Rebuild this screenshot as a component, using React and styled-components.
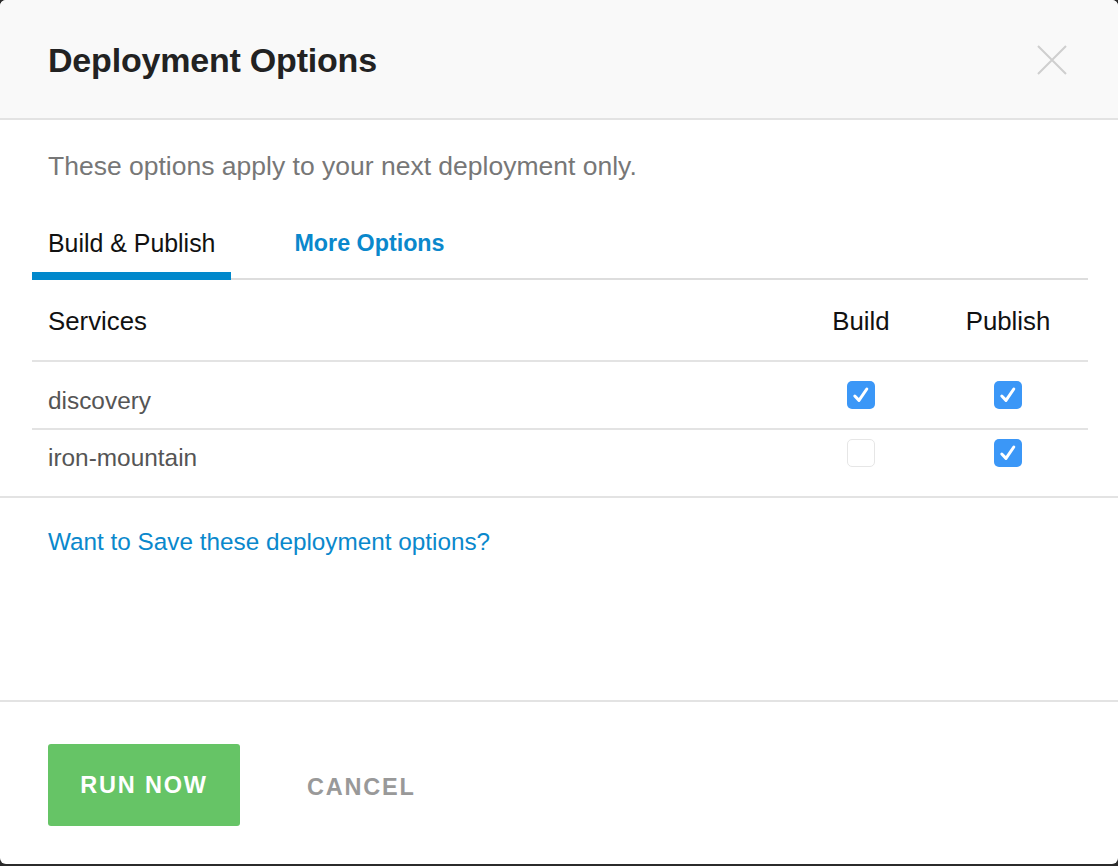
import React, { useState } from 'react';
import styled, { createGlobalStyle } from 'styled-components';

const GlobalStyle = createGlobalStyle`
  html, body {
    margin: 0;
    padding: 0;
    background: #2b2b2b;
  }
  body {
    font-family: "Liberation Sans", Arial, Helvetica, sans-serif;
    -webkit-font-smoothing: antialiased;
  }
`;

const Modal = styled.div`
  width: 1118px;
  height: 864px;
  background: #fff;
  border-radius: 6px;
  overflow: hidden;
  display: flex;
  flex-direction: column;
  box-sizing: border-box;
`;

const Header = styled.div`
  height: 120px;
  box-sizing: border-box;
  background: #f9f9f9;
  border-bottom: 2px solid #e3e3e3;
  display: flex;
  align-items: center;
  justify-content: space-between;
  padding: 2px 51px 0 48px;
`;

const Title = styled.h1`
  margin: 0;
  font-size: 34px;
  font-weight: 700;
  color: #222;
  letter-spacing: -0.2px;
`;

const CloseButton = styled.button`
  background: none;
  border: none;
  padding: 0;
  width: 31px;
  height: 31px;
  cursor: pointer;
  display: flex;
  align-items: center;
  justify-content: center;
`;

const Body = styled.div`
  padding: 30px 30px 0 32px;
`;

const Intro = styled.p`
  margin: 0 0 0 16px;
  font-size: 26.5px;
  color: #777;
  line-height: 32px;
`;

const Tabs = styled.div`
  display: flex;
  margin-top: 44px;
  border-bottom: 2px solid #ddd;
`;

const Tab = styled.div`
  padding: 3px 16px 0;
  margin-bottom: -2px;
  line-height: 28px;
  color: ${(p) => (p.$active ? '#111' : '#0a88cc')};
  font-weight: ${(p) => (p.$active ? 400 : 700)};
  border-bottom: ${(p) => (p.$active ? '8px solid #0088cc' : 'none')};
  padding-bottom: ${(p) => (p.$active ? '15px' : '23px')};
  margin-left: ${(p) => (p.$active ? '0' : '47px')};
  font-size: ${(p) => (p.$active ? '24.9px' : '23.3px')};
  cursor: pointer;
`;

const Table = styled.div`
  display: flex;
  flex-direction: column;
`;

const HeadRow = styled.div`
  display: grid;
  grid-template-columns: 1fr 134px 160px;
  align-items: center;
  height: 82px;
  border-bottom: 2px solid #e3e3e3;
  box-sizing: border-box;
  padding: 2px 0 0 16px;
  font-size: 25.8px;
  color: #111;
`;

const HeadCell = styled.div`
  text-align: ${(p) => p.$align || 'left'};
`;

const Rows = styled.div`
  padding: 10px 0;
`;

const Row = styled.div`
  display: grid;
  grid-template-columns: 1fr 134px 160px;
  align-items: center;
  height: ${(p) => (p.$last ? '56px' : '58px')};
  border-bottom: ${(p) => (p.$last ? 'none' : '2px solid #e3e3e3')};
  box-sizing: border-box;
  padding-left: 16px;
  font-size: 24.4px;
  color: #555;
`;

const Name = styled.div`
  padding-top: ${(p) => (p.$first ? '1px' : '0')};
`;

const BoxCell = styled.div`
  display: flex;
  justify-content: center;
`;

const Check = styled.span`
  width: 28px;
  height: 28px;
  box-sizing: border-box;
  border-radius: 5px;
  background: ${(p) => (p.$on ? '#3b97f7' : '#fff')};
  border: ${(p) => (p.$on ? 'none' : '1px solid #e6e6e6')};
  display: flex;
  align-items: center;
  justify-content: center;
  cursor: pointer;
  margin-top: -10px;
`;

const Divider = styled.div`
  height: 2px;
  background: #e3e3e3;
`;

const SaveLink = styled.a`
  display: block;
  margin: 28px 0 0 48px;
  font-size: 24.3px;
  line-height: 32px;
  color: #0a88cc;
  text-decoration: none;
  cursor: pointer;
`;

const Spacer = styled.div`
  flex: 1;
`;

const Footer = styled.div`
  border-top: 2px solid #e3e3e3;
  height: 164px;
  box-sizing: border-box;
  display: flex;
  align-items: flex-start;
  padding: 42px 48px 0;
  gap: 67px;
`;

const RunButton = styled.button`
  width: 192px;
  height: 82px;
  background: #66c466;
  border: none;
  border-radius: 3px;
  color: #fff;
  font-family: inherit;
  font-size: 23.5px;
  font-weight: 700;
  letter-spacing: 1.8px;
  cursor: pointer;
`;

const CancelButton = styled.button`
  background: none;
  border: none;
  padding: 0;
  height: 86px;
  color: #999;
  font-family: inherit;
  font-size: 23.5px;
  font-weight: 700;
  letter-spacing: 1.8px;
  cursor: pointer;
`;

const CheckMark = () => (
  <svg width="20" height="20" viewBox="0 0 20 20">
    <path d="M3.8 11 L8 15.4 L15.8 4" fill="none" stroke="#fff" strokeWidth="3" strokeLinecap="round" strokeLinejoin="round" />
  </svg>
);

const services = [
  { name: 'discovery', build: true, publish: true },
  { name: 'iron-mountain', build: false, publish: true },
];

export default function App() {
  const [rows, setRows] = useState(services);

  const toggle = (i, key) => {
    setRows((r) => r.map((s, j) => (j === i ? { ...s, [key]: !s[key] } : s)));
  };

  return (
    <>
      <GlobalStyle />
      <Modal>
        <Header>
          <Title>Deployment Options</Title>
          <CloseButton aria-label="Close">
            <svg width="30" height="30" viewBox="0 0 30 30">
              <path d="M1 1 L29 29 M29 1 L1 29" stroke="#cfcfcf" strokeWidth="2" />
            </svg>
          </CloseButton>
        </Header>

        <Body>
          <Intro>These options apply to your next deployment only.</Intro>

          <Tabs>
            <Tab $active>Build &amp; Publish</Tab>
            <Tab>More Options</Tab>
          </Tabs>

          <Table>
            <HeadRow>
              <HeadCell>Services</HeadCell>
              <HeadCell $align="center">Build</HeadCell>
              <HeadCell $align="center">Publish</HeadCell>
            </HeadRow>
            <Rows>
              {rows.map((s, i) => (
                <Row key={s.name} $last={i === rows.length - 1}>
                  <Name $first={i === 0}>{s.name}</Name>
                  <BoxCell>
                    <Check $on={s.build} onClick={() => toggle(i, 'build')}>
                      {s.build && <CheckMark />}
                    </Check>
                  </BoxCell>
                  <BoxCell>
                    <Check $on={s.publish} onClick={() => toggle(i, 'publish')}>
                      {s.publish && <CheckMark />}
                    </Check>
                  </BoxCell>
                </Row>
              ))}
            </Rows>
          </Table>
        </Body>
        <Divider />

        <SaveLink>Want to Save these deployment options?</SaveLink>

        <Spacer />

        <Footer>
          <RunButton>RUN NOW</RunButton>
          <CancelButton>CANCEL</CancelButton>
        </Footer>
      </Modal>
    </>
  );
}
